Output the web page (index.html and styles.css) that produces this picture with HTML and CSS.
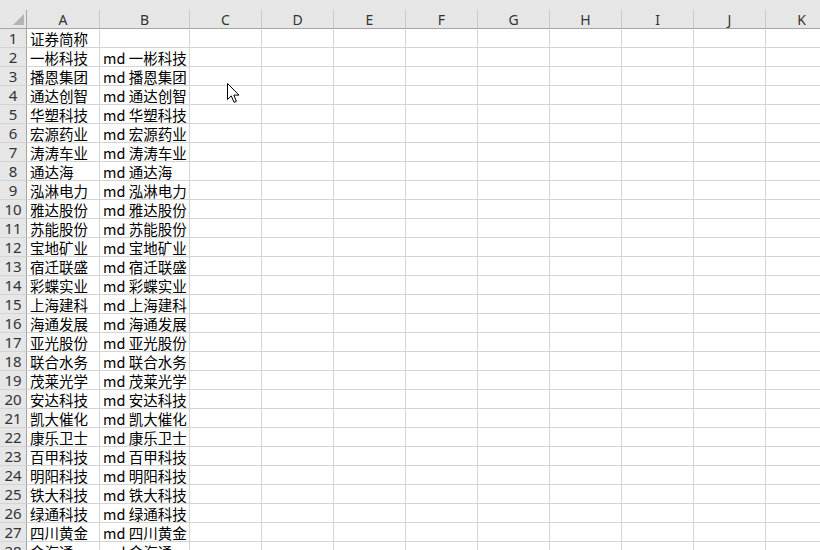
FILE: index.html
```html
<!DOCTYPE html>
<html lang="zh-CN">
<head>
<meta charset="utf-8">
<title>Sheet</title>
<link rel="stylesheet" href="styles.css">
</head>
<body>
<div class="sheet">
  <div class="band"></div>
  <div class="row head">
    <div class="corner"><span class="tri"></span></div>
    <div class="ch">A</div><div class="ch">B</div><div class="ch">C</div><div class="ch">D</div><div class="ch">E</div><div class="ch">F</div><div class="ch">G</div><div class="ch">H</div><div class="ch">I</div><div class="ch">J</div><div class="ch">K</div>
  </div>
  <div class="row"><div class="rh">1</div><div class="c">证券简称</div><div class="c"></div><div class="c"></div><div class="c"></div><div class="c"></div><div class="c"></div><div class="c"></div><div class="c"></div><div class="c"></div><div class="c"></div><div class="c"></div></div>
  <div class="row"><div class="rh">2</div><div class="c">一彬科技</div><div class="c">md 一彬科技</div><div class="c"></div><div class="c"></div><div class="c"></div><div class="c"></div><div class="c"></div><div class="c"></div><div class="c"></div><div class="c"></div><div class="c"></div></div>
  <div class="row"><div class="rh">3</div><div class="c">播恩集团</div><div class="c">md 播恩集团</div><div class="c"></div><div class="c"></div><div class="c"></div><div class="c"></div><div class="c"></div><div class="c"></div><div class="c"></div><div class="c"></div><div class="c"></div></div>
  <div class="row"><div class="rh">4</div><div class="c">通达创智</div><div class="c">md 通达创智</div><div class="c"></div><div class="c"></div><div class="c"></div><div class="c"></div><div class="c"></div><div class="c"></div><div class="c"></div><div class="c"></div><div class="c"></div></div>
  <div class="row"><div class="rh">5</div><div class="c">华塑科技</div><div class="c">md 华塑科技</div><div class="c"></div><div class="c"></div><div class="c"></div><div class="c"></div><div class="c"></div><div class="c"></div><div class="c"></div><div class="c"></div><div class="c"></div></div>
  <div class="row"><div class="rh">6</div><div class="c">宏源药业</div><div class="c">md 宏源药业</div><div class="c"></div><div class="c"></div><div class="c"></div><div class="c"></div><div class="c"></div><div class="c"></div><div class="c"></div><div class="c"></div><div class="c"></div></div>
  <div class="row"><div class="rh">7</div><div class="c">涛涛车业</div><div class="c">md 涛涛车业</div><div class="c"></div><div class="c"></div><div class="c"></div><div class="c"></div><div class="c"></div><div class="c"></div><div class="c"></div><div class="c"></div><div class="c"></div></div>
  <div class="row"><div class="rh">8</div><div class="c">通达海</div><div class="c">md 通达海</div><div class="c"></div><div class="c"></div><div class="c"></div><div class="c"></div><div class="c"></div><div class="c"></div><div class="c"></div><div class="c"></div><div class="c"></div></div>
  <div class="row"><div class="rh">9</div><div class="c">泓淋电力</div><div class="c">md 泓淋电力</div><div class="c"></div><div class="c"></div><div class="c"></div><div class="c"></div><div class="c"></div><div class="c"></div><div class="c"></div><div class="c"></div><div class="c"></div></div>
  <div class="row"><div class="rh">10</div><div class="c">雅达股份</div><div class="c">md 雅达股份</div><div class="c"></div><div class="c"></div><div class="c"></div><div class="c"></div><div class="c"></div><div class="c"></div><div class="c"></div><div class="c"></div><div class="c"></div></div>
  <div class="row"><div class="rh">11</div><div class="c">苏能股份</div><div class="c">md 苏能股份</div><div class="c"></div><div class="c"></div><div class="c"></div><div class="c"></div><div class="c"></div><div class="c"></div><div class="c"></div><div class="c"></div><div class="c"></div></div>
  <div class="row"><div class="rh">12</div><div class="c">宝地矿业</div><div class="c">md 宝地矿业</div><div class="c"></div><div class="c"></div><div class="c"></div><div class="c"></div><div class="c"></div><div class="c"></div><div class="c"></div><div class="c"></div><div class="c"></div></div>
  <div class="row"><div class="rh">13</div><div class="c">宿迁联盛</div><div class="c">md 宿迁联盛</div><div class="c"></div><div class="c"></div><div class="c"></div><div class="c"></div><div class="c"></div><div class="c"></div><div class="c"></div><div class="c"></div><div class="c"></div></div>
  <div class="row"><div class="rh">14</div><div class="c">彩蝶实业</div><div class="c">md 彩蝶实业</div><div class="c"></div><div class="c"></div><div class="c"></div><div class="c"></div><div class="c"></div><div class="c"></div><div class="c"></div><div class="c"></div><div class="c"></div></div>
  <div class="row"><div class="rh">15</div><div class="c">上海建科</div><div class="c">md 上海建科</div><div class="c"></div><div class="c"></div><div class="c"></div><div class="c"></div><div class="c"></div><div class="c"></div><div class="c"></div><div class="c"></div><div class="c"></div></div>
  <div class="row"><div class="rh">16</div><div class="c">海通发展</div><div class="c">md 海通发展</div><div class="c"></div><div class="c"></div><div class="c"></div><div class="c"></div><div class="c"></div><div class="c"></div><div class="c"></div><div class="c"></div><div class="c"></div></div>
  <div class="row"><div class="rh">17</div><div class="c">亚光股份</div><div class="c">md 亚光股份</div><div class="c"></div><div class="c"></div><div class="c"></div><div class="c"></div><div class="c"></div><div class="c"></div><div class="c"></div><div class="c"></div><div class="c"></div></div>
  <div class="row"><div class="rh">18</div><div class="c">联合水务</div><div class="c">md 联合水务</div><div class="c"></div><div class="c"></div><div class="c"></div><div class="c"></div><div class="c"></div><div class="c"></div><div class="c"></div><div class="c"></div><div class="c"></div></div>
  <div class="row"><div class="rh">19</div><div class="c">茂莱光学</div><div class="c">md 茂莱光学</div><div class="c"></div><div class="c"></div><div class="c"></div><div class="c"></div><div class="c"></div><div class="c"></div><div class="c"></div><div class="c"></div><div class="c"></div></div>
  <div class="row"><div class="rh">20</div><div class="c">安达科技</div><div class="c">md 安达科技</div><div class="c"></div><div class="c"></div><div class="c"></div><div class="c"></div><div class="c"></div><div class="c"></div><div class="c"></div><div class="c"></div><div class="c"></div></div>
  <div class="row"><div class="rh">21</div><div class="c">凯大催化</div><div class="c">md 凯大催化</div><div class="c"></div><div class="c"></div><div class="c"></div><div class="c"></div><div class="c"></div><div class="c"></div><div class="c"></div><div class="c"></div><div class="c"></div></div>
  <div class="row"><div class="rh">22</div><div class="c">康乐卫士</div><div class="c">md 康乐卫士</div><div class="c"></div><div class="c"></div><div class="c"></div><div class="c"></div><div class="c"></div><div class="c"></div><div class="c"></div><div class="c"></div><div class="c"></div></div>
  <div class="row"><div class="rh">23</div><div class="c">百甲科技</div><div class="c">md 百甲科技</div><div class="c"></div><div class="c"></div><div class="c"></div><div class="c"></div><div class="c"></div><div class="c"></div><div class="c"></div><div class="c"></div><div class="c"></div></div>
  <div class="row"><div class="rh">24</div><div class="c">明阳科技</div><div class="c">md 明阳科技</div><div class="c"></div><div class="c"></div><div class="c"></div><div class="c"></div><div class="c"></div><div class="c"></div><div class="c"></div><div class="c"></div><div class="c"></div></div>
  <div class="row"><div class="rh">25</div><div class="c">铁大科技</div><div class="c">md 铁大科技</div><div class="c"></div><div class="c"></div><div class="c"></div><div class="c"></div><div class="c"></div><div class="c"></div><div class="c"></div><div class="c"></div><div class="c"></div></div>
  <div class="row"><div class="rh">26</div><div class="c">绿通科技</div><div class="c">md 绿通科技</div><div class="c"></div><div class="c"></div><div class="c"></div><div class="c"></div><div class="c"></div><div class="c"></div><div class="c"></div><div class="c"></div><div class="c"></div></div>
  <div class="row"><div class="rh">27</div><div class="c">四川黄金</div><div class="c">md 四川黄金</div><div class="c"></div><div class="c"></div><div class="c"></div><div class="c"></div><div class="c"></div><div class="c"></div><div class="c"></div><div class="c"></div><div class="c"></div></div>
  <div class="row"><div class="rh">28</div><div class="c">金海通</div><div class="c">md 金海通</div><div class="c"></div><div class="c"></div><div class="c"></div><div class="c"></div><div class="c"></div><div class="c"></div><div class="c"></div><div class="c"></div><div class="c"></div></div>
</div>
<svg class="cursor" width="14" height="21" viewBox="0 0 14 21" xmlns="http://www.w3.org/2000/svg">
  <path d="M0.5 0.5 L0.5 16.5 L4.3 12.9 L7 19.3 L9.4 18.3 L6.8 12.1 L12 12.1 Z" fill="#ffffff" stroke="#000000" stroke-width="1" stroke-linejoin="miter"/>
</svg>
</body>
</html>
```

FILE: styles.css
```css
html, body {
  margin: 0;
  padding: 0;
  background: #ffffff;
  overflow: hidden;
}
body {
  width: 820px;
  height: 550px;
  position: relative;
  font-family: "Noto Sans CJK SC", "Noto Sans", sans-serif;
}
.sheet {
  display: flex;
  flex-direction: column;
  width: 840px;
}
.band {
  height: 10px;
  background: #e6e6e6;
}
.row {
  display: grid;
  grid-template-columns: 27px 73px 90px repeat(9, 72px);
  height: 19px;
}
.row > div {
  box-sizing: border-box;
  border-right: 1px solid #d4d4d4;
  border-bottom: 1px solid #d4d4d4;
  height: 19px;
  overflow: hidden;
  white-space: nowrap;
}
.head {
  background: #e6e6e6;
}
.head > div {
  border-right: 1px solid #c8c8c8;
  border-bottom: 1px solid #a6a6a6;
}
.corner {
  position: relative;
  border-right: 1px solid #a6a6a6 !important;
}
.tri {
  position: absolute;
  right: 2px;
  bottom: 3px;
  width: 0;
  height: 0;
  border-left: 11px solid transparent;
  border-bottom: 11px solid #b4b4b4;
}
.ch {
  text-align: center;
  font-family: "Noto Sans", "Liberation Sans", sans-serif;
  font-size: 14px;
  line-height: 19px;
  color: #333333;
}
.rh {
  background: #e6e6e6;
  border-right: 1px solid #a6a6a6 !important;
  text-align: center;
  font-size: 15px;
  line-height: 19px;
  color: #333333;
  font-family: "Noto Sans", "Liberation Sans", sans-serif;
}
.c {
  padding-left: 3px;
  font-size: 14.5px;
  line-height: 19px;
  color: #000000;
}
.cursor {
  position: absolute;
  left: 227px;
  top: 83px;
}
```
